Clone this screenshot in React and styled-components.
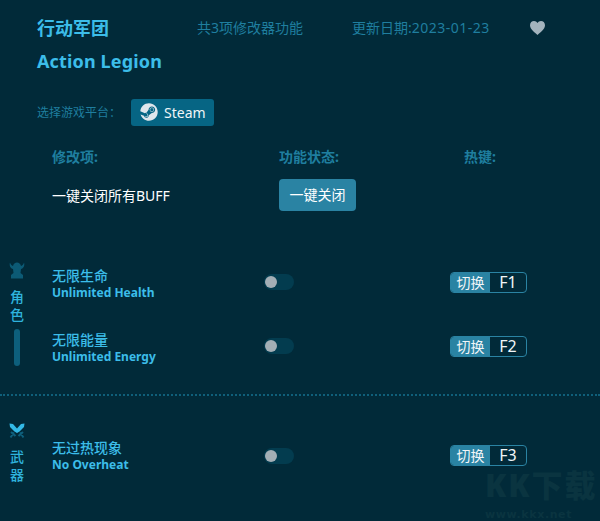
import React from "react";
import styled, { createGlobalStyle } from "styled-components";
import { FaSteam } from "react-icons/fa";

const Global = createGlobalStyle`
  html, body { margin: 0; padding: 0; background: #012a39; }
  * { box-sizing: border-box; }
`;

const cjk = `"Noto Sans", "Noto Sans CJK SC", sans-serif`;

const Page = styled.div`
  position: relative;
  width: 600px;
  height: 521px;
  overflow: hidden;
  background: #012a39;
  font-family: ${cjk};
`;

const Header = styled.header`
  display: grid;
  grid-template-columns: 160px 155px 178px 1fr;
  align-items: center;
  padding: 13px 0 0 37px;
  height: 43px;
`;

const Title = styled.h1`
  margin: 0;
  font-size: 18px;
  line-height: 26px;
  font-weight: 700;
  color: #3cbde9;
`;

const Meta = styled.span`
  font-size: 14px;
  line-height: 26px;
  color: #1f7e9f;
  white-space: nowrap;
`;

const Digits = styled.span`
  letter-spacing: 0.5px;
`;

const Heart = styled.svg`
  display: block;
  width: 15px;
  height: 14px;
`;

const EnTitle = styled.h2`
  margin: 0;
  padding: 5px 0 0 37px;
  font-size: 18px;
  line-height: 26px;
  font-weight: 700;
  letter-spacing: 0.15px;
  color: #3cbde9;
`;

const PlatformRow = styled.div`
  display: flex;
  align-items: center;
  padding: 5px 0 0 37px;
  height: 43px;
  margin-top: 14px;
`;

const PlatformLabel = styled.span`
  width: 94px;
  font-size: 12px;
  color: #1f7e9f;
  white-space: nowrap;
`;

const PlatformButton = styled.div`
  display: flex;
  align-items: center;
  gap: 6px;
  width: 83px;
  height: 27px;
  padding-left: 9px;
  border-radius: 3px;
  background: #066584;
  color: #f0f6f8;
  font-size: 14px;
`;

const Columns = styled.div`
  display: grid;
  grid-template-columns: 227px 185px 1fr;
  align-items: center;
  padding: 3px 0 0 52px;
  margin-top: 11px;
  height: 24px;
  font-size: 14px;
  font-weight: 700;
  color: #1f7e9f;
`;

const BuffRow = styled.div`
  display: grid;
  grid-template-columns: 227px 1fr;
  align-items: center;
  padding-left: 52px;
  margin-top: 13px;
  height: 32px;
  color: #fff;
  font-size: 14px;
`;

const CloseAll = styled.div`
  width: 77px;
  height: 32px;
  border-radius: 4px;
  background: #2a83a3;
  color: #fff;
  font-size: 14px;
  line-height: 32px;
  text-align: center;
`;

const Section = styled.section`
  display: flex;
  height: ${(p) => p.$h}px;
  margin-top: ${(p) => p.$top}px;
`;

const Side = styled.div`
  flex: none;
  width: 34px;
  display: flex;
  flex-direction: column;
  align-items: center;
  color: #2fb3dd;
  font-size: 14px;
  font-weight: 500;
`;

const SideIcon = styled.svg`
  display: block;
  width: 18px;
  height: 18px;
`;

const SideLabel = styled.div`
  margin-top: ${(p) => p.$top}px;
  width: 14px;
  line-height: 18px;
  text-align: center;
`;

const ScrollThumb = styled.div`
  width: 6px;
  height: 37px;
  margin-top: 5px;
  border-radius: 3px;
  background: #0d5f7c;
`;

const Rows = styled.div`
  flex: 1;
  display: flex;
  flex-direction: column;
  gap: ${(p) => p.$gap}px;
  padding-top: ${(p) => p.$pad}px;
`;

const Row = styled.div`
  display: grid;
  grid-template-columns: 212px 186px 1fr;
  align-items: center;
  height: 34px;
  padding-left: 18px;
`;

const Names = styled.div`
  display: flex;
  flex-direction: column;
  padding-top: ${(p) => p.$shift}px;
  color: #3cbde9;
`;

const NameZh = styled.span`
  font-size: 14px;
  line-height: 17px;
  font-weight: 500;
`;

const NameEn = styled.span`
  font-size: 12px;
  line-height: 17px;
  font-weight: 700;
  white-space: nowrap;
`;

const Toggle = styled.div`
  position: relative;
  width: 30px;
  height: 16px;
  border-radius: 8px;
  background: #033c4f;
`;

const Knob = styled.div`
  position: absolute;
  left: 1px;
  top: 2px;
  width: 12px;
  height: 12px;
  border-radius: 50%;
  background: #a3aeb5;
`;

const Hotkey = styled.div`
  display: flex;
  width: 77px;
  height: 21px;
  border: 1px solid #2a83a3;
  border-radius: 4px;
  overflow: hidden;
  color: #f2f6f8;
`;

const HotLabel = styled.span`
  width: 39px;
  background: #2a83a3;
  font-size: 14px;
  line-height: 19px;
  text-align: center;
`;

const HotKeyName = styled.span`
  flex: 1;
  font-size: 16px;
  line-height: 19px;
  text-align: center;
`;

const Divider = styled.div`
  height: 0;
  margin-top: 5px;
  border-top: 2px dotted #0f5f7a;
`;

const Watermark = styled.div`
  position: absolute;
  left: 485px;
  top: 468px;
  width: 115px;
  color: #0a3440;
`;

const WatermarkMain = styled.div`
  font-size: 31px;
  line-height: 34px;
  font-weight: 900;
  letter-spacing: 2px;
  white-space: nowrap;
`;

const WatermarkUrl = styled.div`
  margin-top: 6px;
  font-family: "DejaVu Sans", sans-serif;
  font-size: 11px;
  line-height: 13px;
  font-weight: 700;
  letter-spacing: 0.6px;
  white-space: nowrap;
`;

const HeroIcon = () => (
  <SideIcon viewBox="0 0 18 18" aria-hidden="true">
    <path
      d="M2 1.5 C2.5 3.5 3.5 4.5 5 5 C5.5 3 7 1.5 9 1.5 C11 1.5 12.5 3 13 5 C14.5 4.5 15.5 3.5 16 1.5 C17 4.5 15.5 7.5 13 8 L12.5 12 L15 14 L15 17.5 L3 17.5 L3 14 L5.5 12 L5 8 C2.5 7.5 1 4.5 2 1.5Z"
      fill="#0c5a75"
    />
  </SideIcon>
);

const SwordsIcon = () => (
  <SideIcon viewBox="0 0 18 18" aria-hidden="true">
    <path
      d="M6 10.5 L2.5 15.5 M12 10.5 L15.5 15.5 M3 10 L7.5 14 M15 10 L10.5 14"
      stroke="#0e5f7c"
      strokeWidth="2"
      fill="none"
    />
    <path
      d="M1.5 1.5 L5 2 L9 6.5 L13 2 L16.5 1.5 L16 5 L11.5 9.5 L9 11 L6.5 9.5 L2 5Z"
      fill="#33b9e6"
    />
  </SideIcon>
);

const Cheat = ({ zh, en, hot, shift = 4 }) => (
  <Row>
    <Names $shift={shift}>
      <NameZh>{zh}</NameZh>
      <NameEn>{en}</NameEn>
    </Names>
    <Toggle>
      <Knob />
    </Toggle>
    <Hotkey>
      <HotLabel>切换</HotLabel>
      <HotKeyName>{hot}</HotKeyName>
    </Hotkey>
  </Row>
);

export default function App() {
  return (
    <Page>
      <Global />
      <Header>
        <Title>行动军团</Title>
        <Meta>共3项修改器功能</Meta>
        <Meta>
          更新日期:<Digits>2023-01-23</Digits>
        </Meta>
        <Heart viewBox="0 0 15 14" aria-hidden="true">
          <path
            d="M7.5 14 C5 11.5 0 8.5 0 4.2 C0 1.6 1.9 0 4 0 C5.5 0 6.8 0.8 7.5 2 C8.2 0.8 9.5 0 11 0 C13.1 0 15 1.6 15 4.2 C15 8.5 10 11.5 7.5 14Z"
            fill="#a3b3bd"
          />
        </Heart>
      </Header>
      <EnTitle>Action Legion</EnTitle>
      <PlatformRow>
        <PlatformLabel>选择游戏平台：</PlatformLabel>
        <PlatformButton>
          <FaSteam size={18} color="#dfe6ec" />
          Steam
        </PlatformButton>
      </PlatformRow>
      <Columns>
        <span>修改项:</span>
        <span>功能状态:</span>
        <span>热键:</span>
      </Columns>
      <BuffRow>
        <span>一键关闭所有BUFF</span>
        <CloseAll>一键关闭</CloseAll>
      </BuffRow>
      <Section $h={128} $top={50}>
        <Side>
          <HeroIcon />
          <SideLabel $top={9}>角色</SideLabel>
          <ScrollThumb />
        </Side>
        <Rows $gap={30} $pad={2}>
          <Cheat zh="无限生命" en="Unlimited Health" hot="F1" />
          <Cheat zh="无限能量" en="Unlimited Energy" hot="F2" />
        </Rows>
      </Section>
      <Divider />
      <Section $h={90} $top={26}>
        <Side>
          <SwordsIcon />
          <SideLabel $top={8}>武器</SideLabel>
        </Side>
        <Rows $gap={0} $pad={16}>
          <Cheat zh="无过热现象" en="No Overheat" hot="F3" shift={1} />
        </Rows>
      </Section>
      <Watermark>
        <WatermarkMain>KK下载</WatermarkMain>
        <WatermarkUrl>www.kkx.net</WatermarkUrl>
      </Watermark>
    </Page>
  );
}
